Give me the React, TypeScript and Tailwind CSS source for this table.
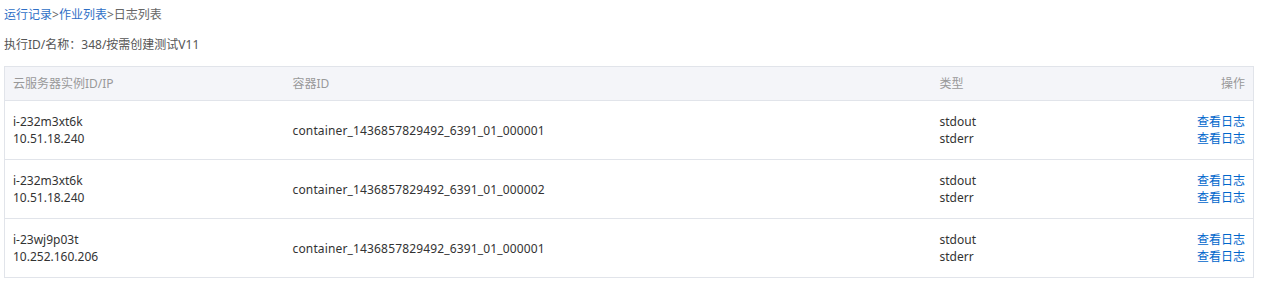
import React from "react";

const rows = [
  { id: "i-232m3xt6k", ip: "10.51.18.240", c: "container_1436857829492_6391_01_000001" },
  { id: "i-232m3xt6k", ip: "10.51.18.240", c: "container_1436857829492_6391_01_000002" },
  { id: "i-23wj9p03t", ip: "10.252.160.206", c: "container_1436857829492_6391_01_000001" },
];

export default function App() {
  return (
    <div
      className="bg-white text-[12px] text-[#333] pl-[4px] pt-[6px]"
      style={{ fontFamily: '"Noto Sans", "Noto Sans CJK SC", sans-serif' }}
    >
      <div className="h-[18px] leading-[18px]">
        <span className="text-[#2f6fc6]">运行记录</span>
        <span className="text-[#666]">&gt;</span>
        <span className="text-[#2f6fc6]">作业列表</span>
        <span className="text-[#666]">&gt;日志列表</span>
      </div>
      <div className="h-[18px] leading-[18px] mt-[11px] text-[#555]">
        执行ID/名称<span style={{ fontFamily: '"Noto Sans CJK SC", sans-serif' }}>：</span>348/按需创建测试V11
      </div>
      <table className="mt-[13px] w-[1250px] border-collapse border border-[#e1e4ea] table-fixed">
        <thead>
          <tr className="bg-[#f4f5f9] h-[34px] text-[#999]">
            <th className="w-[280px] text-left font-normal pl-[8px] border-b border-[#e1e4ea]">云服务器实例ID/IP</th>
            <th className="w-[647px] text-left font-normal pl-[8px] border-b border-[#e1e4ea]">容器ID</th>
            <th className="text-left font-normal pl-[8px] border-b border-[#e1e4ea]">类型</th>
            <th className="w-[120px] text-right font-normal pr-[8px] border-b border-[#e1e4ea]">操作</th>
          </tr>
        </thead>
        <tbody>
          {rows.map((r, i) => (
            <tr key={i} className="h-[59px] border-b border-[#e1e4ea] leading-[17px]">
              <td className="pl-[8px]">
                <div>{r.id}</div>
                <div>{r.ip}</div>
              </td>
              <td className="pl-[8px] tracking-[0.15px]">{r.c}</td>
              <td className="pl-[8px]">
                <div>stdout</div>
                <div>stderr</div>
              </td>
              <td className="pr-[8px] text-right text-[#0066cc]">
                <div>查看日志</div>
                <div>查看日志</div>
              </td>
            </tr>
          ))}
        </tbody>
      </table>
    </div>
  );
}
